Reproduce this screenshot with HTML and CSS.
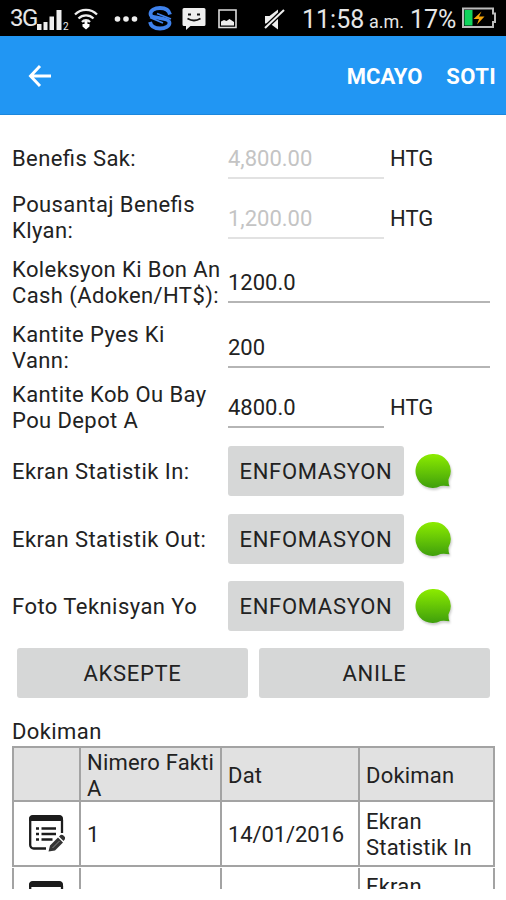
FILE: index.html
```html
<!DOCTYPE html>
<html lang="ht">
<head>
<meta charset="utf-8">
<title>Depot</title>
<link rel="stylesheet" href="styles.css">
</head>
<body>

<svg width="0" height="0" class="defs">
<defs>
<linearGradient id="green" x1="0" y1="0" x2="0" y2="1">
<stop offset="0" stop-color="#8cec00"/>
<stop offset="1" stop-color="#3f9f0c"/>
</linearGradient>
<symbol id="bubble" viewBox="0 0 40 40">
<path d="M17.500 3a17 17 0 1 0 8 32q3-.8 9 .2q-1.200-2-1-7A17 17 0 0 0 17.500 3z" fill="url(#green)"/>
</symbol>
<symbol id="edit" viewBox="0 0 36 38">
<path d="M33 18V5a3.500 3.500 0 0 0-3.500-3.500h-25A3.500 3.500 0 0 0 1.200 5v25a3.500 3.500 0 0 0 3.500 3.500H17" fill="none" stroke="#1c1c1c" stroke-width="2.300"/>
<path d="M0 6V4a4 4 0 0 1 4-4h26A4 4 0 0 1 34 4v2z" fill="#1c1c1c"/>
<path d="M7 13.500h3M7 19h3M7 24.500h3M12.500 13.500h14.500M12.500 19h14.500M12.500 24.500h11" stroke="#1c1c1c" stroke-width="2.300"/>
<path d="M19.500 36.500l1.500-6 8-8 5 5-8 8zM30 21.500l1.500-1.500q1.500-.8 3.500 1t.7 3.500l-1.200 1.500z" fill="#333"/>
<path d="M23.500 33l7-7" stroke="#888" stroke-width="1"/>
</symbol>
</defs>
</svg>

<header class="status">
<span class="net">3G</span>
<svg class="signal" width="32" height="24" viewBox="0 0 32 24">
<path d="M0 17h4.500v6H0zM6.500 15h4v8h-4zM12.500 9.500h4.500V23h-4.500zM19.500 3h5v20h-5z" fill="#eee"/>
<text x="26" y="23" class="sim">2</text>
</svg>
<svg class="wifi" width="24" height="24" viewBox="0 0 24 24">
<path d="M1 8.500a15.500 15.500 0 0 1 22 0M4.500 12.500a10.500 10.500 0 0 1 15 0M8 16a5.500 5.500 0 0 1 8 0" fill="none" stroke="#eee" stroke-width="2.300"/>
<path d="M8.500 18h2V15h3v3h2v2.500L12 23.500l-3.500-3z" fill="#fff"/>
</svg>
<svg class="dots" width="24" height="8" viewBox="0 0 24 8"><g fill="#eee"><circle cx="3.500" cy="4" r="2.800"/><circle cx="12" cy="4" r="2.800"/><circle cx="20.500" cy="4" r="2.800"/></g></svg>
<svg class="sync" width="24" height="26" viewBox="0 0 24 26">
<path d="M22 9.500C21 5 17 3 12 3C6.500 3 2.500 5.500 2.500 9C2.500 11.500 4.500 12 8 12.500L16 14C20 14.800 21.500 15.500 21.500 18C21.500 21 17.500 23.500 12 23.500C7 23.500 3 21.500 2 17" fill="none" stroke="#3f82ec" stroke-width="3.800"/>
<path d="M2 12.500l13 5.500M9 8.500l14 5.500" stroke="#3f82ec" stroke-width="1.800"/>
</svg>
<svg class="sms" width="24" height="24" viewBox="0 0 24 24">
<path d="M2 1h20q1.500 0 1.500 1.500v15q0 1.500-1.500 1.500H8.500L4 23v-4H2q-1.500 0-1.500-1.500v-15Q.5 1 2 1z" fill="#eee"/>
<path d="M6 7.500h3M15 7.500h3M5.500 11.500q6.500 4 13 0" fill="none" stroke="#111" stroke-width="1.800"/>
</svg>
<svg class="pic" width="19" height="20" viewBox="0 0 19 20">
<path d="M1 1h17v17.500H1z" fill="none" stroke="#ddd" stroke-width="1.600"/>
<path d="M3 16.500v-4l3-1.500 2.500 1 3-2 4.500 3v3.500z" fill="#eee"/>
</svg>
<svg class="mute" width="22" height="24" viewBox="0 0 22 24">
<path d="M1 8h4.500L14 1.500v20L6 15.500H1z" fill="#eee"/>
<path d="M1 20L20 2" stroke="#000" stroke-width="4.500"/>
<path d="M1 20L20 2" stroke="#eee" stroke-width="2"/>
</svg>
<span class="clock">11:58</span>
<span class="ampm">a.m.</span>
<span class="percent">17%</span>
<svg class="battery" width="34" height="22" viewBox="0 0 34 22">
<path d="M1 1.500h30v5h2v8.500h-2v5H1z" fill="none" stroke="#bbb" stroke-width="2"/>
<path d="M2.500 3h8v15.500h-8z" fill="#10d45c"/>
<path d="M19.500 4.500L11.500 12h5.500l-2 5.500L22.500 9.500h-5.500z" fill="#f5a50a"/>
</svg>
</header>

<nav class="bar">
<svg class="back" width="24" height="24" viewBox="0 0 24 24"><path d="M23 12H3M12 2L2.500 12l9.500 10" fill="none" stroke="#fff" stroke-width="2.900"/></svg>
<a class="mcayo">MCAYO</a>
<a class="soti">SOTI</a>
</nav>

<main class="page">
<div class="form">
<div class="row"><label>Benefis Sak:</label><div class="field short off">4,800.00</div><span class="unit">HTG</span></div>
<div class="row"><label class="two">Pousantaj Benefis Klyan:</label><div class="field short off">1,200.00</div><span class="unit">HTG</span></div>
<div class="row"><label class="two">Koleksyon Ki Bon An Cash (Adoken/HT$):</label><div class="field">1200.0</div></div>
<div class="row"><label class="two">Kantite Pyes Ki<br>Vann:</label><div class="field">200</div></div>
<div class="row"><label>Kantite Kob Ou Bay Pou Depot A</label><div class="field short">4800.0</div><span class="unit">HTG</span></div>
<div class="row"><label class="one">Ekran Statistik In:</label><button class="info">ENFOMASYON</button><svg class="bubble"><use href="#bubble"/></svg></div>
<div class="row"><label class="one">Ekran Statistik Out:</label><button class="info">ENFOMASYON</button><svg class="bubble"><use href="#bubble"/></svg></div>
<div class="row"><label class="one">Foto Teknisyan Yo</label><button class="info">ENFOMASYON</button><svg class="bubble"><use href="#bubble"/></svg></div>
</div>

<div class="actions">
<button>AKSEPTE</button>
<button>ANILE</button>
</div>

<div class="title">Dokiman</div>
<div class="table head">
<div></div><div>Nimero Fakti A</div><div>Dat</div><div>Dokiman</div>
</div>
<div class="table">
<div class="icon"><svg class="edit"><use href="#edit"/></svg></div><div>1</div><div class="date">14/01/2016</div><div>Ekran Statistik In</div>
</div>
<div class="clip">
<div class="table">
<div class="icon"><svg class="edit"><use href="#edit"/></svg></div><div></div><div></div><div class="top">Ekran</div>
</div>
</div>
</main>

</body>
</html>
```
FILE: styles.css
```css
*{
box-sizing:border-box;
}
body{
margin:0; width:506px; height:900px; overflow:hidden; background:#fff; color:#222; font-family:Roboto, sans-serif; font-size:22px; line-height:26px; letter-spacing:0.4px; font-feature-settings:"liga";
}
svg{
display:block; flex:none;
}
.defs{
position:absolute;
}

/* status bar */
.status{
display:flex; align-items:center; height:36px; padding-left:10px; background:#000; color:#e6e6e6; white-space:nowrap; letter-spacing:0;
}
.net{
width:27px; font-size:24px; letter-spacing:-1.5px;
}
.signal{
margin-top:2px;
}
.sim{
font-size:10px; fill:#eee;
}
.wifi{
margin-left:5px; margin-top:-1px;
}
.dots{
margin-left:16px; margin-top:2px;
}
.sync{
margin-left:10px;
}
.sms{
margin-left:10px; margin-top:2px;
}
.pic{
margin-left:12px; margin-top:1px;
}
.mute{
margin-left:27px; margin-top:3px;
}
.clock{
width:67px; margin-left:16px; margin-top:3px; font-size:25px;
}
.ampm{
width:41px; font-size:18px; margin-top:8px;
}
.percent{
width:46px; margin-top:3px; font-size:25px;
}
.battery{
margin-left:6px;
}

.bar{
display:flex; align-items:center; height:79px; padding:3px 10px 0 28px; background:#2196f3; border-bottom:1px solid #1b87dd; color:#fff; font-weight:700; letter-spacing:0;
}
.back{
margin-top:-2px;
}
.mcayo{
margin-left:auto;
}
.soti{
margin-left:24px; letter-spacing:0.4px;
}

.page{
padding:14px 11px 0 12px;
}
.form{
display:grid; grid-template-rows:60px 60px 69px 61px 58.5px repeat(3, 67.5px);
}
.row{
display:flex; align-items:center;
}
label{
width:216px; flex:none;
}
.two{
padding-bottom:2px;
}
.one{
padding-top:2px; letter-spacing:0.45px;
}
.field{
width:262px; height:39px; padding-top:6px; border-bottom:2px solid #b5b5b5; letter-spacing:0;
}
.short{
width:156px;
}
.off{
color:#c4c4c4; border-color:#e2e2e2;
}
.unit{
margin-left:6px; letter-spacing:0;
}
button{
height:50px; padding:2px 0 0; border:0; border-radius:3px; background:#d6d7d7; color:#222; font:inherit; letter-spacing:0.7px;
}
.info{
width:176px;
}
.bubble{
width:40px; height:40px; margin-left:11px; filter:drop-shadow(1px 2px 1px #0003);
}
.actions{
display:grid; grid-template-columns:1fr 1fr; gap:11px; padding:8px 5px 21px;
}
.title{
margin-bottom:1px;
}

/* documents */
.table{
display:grid; grid-template-columns:67px 141px 138px 135px; height:65px; border:solid #a3a3a3; border-width:0 0 2px 2px; letter-spacing:0.2px;
}
.table div{
display:flex; align-items:center; padding:2px 0 0 6px; border-right:2px solid #a3a3a3;
}
.table .icon{
justify-content:center; padding:0;
}
.table .date{
letter-spacing:-0.1px;
}
.table .top{
align-items:flex-start; padding-top:6px;
}
.head{
height:56px; background:#e1e1e1; border-top-width:2px;
}
.edit{
width:36px; height:38px;
}
.clip{
height:21px; margin-top:1px; overflow:hidden;
}
```
